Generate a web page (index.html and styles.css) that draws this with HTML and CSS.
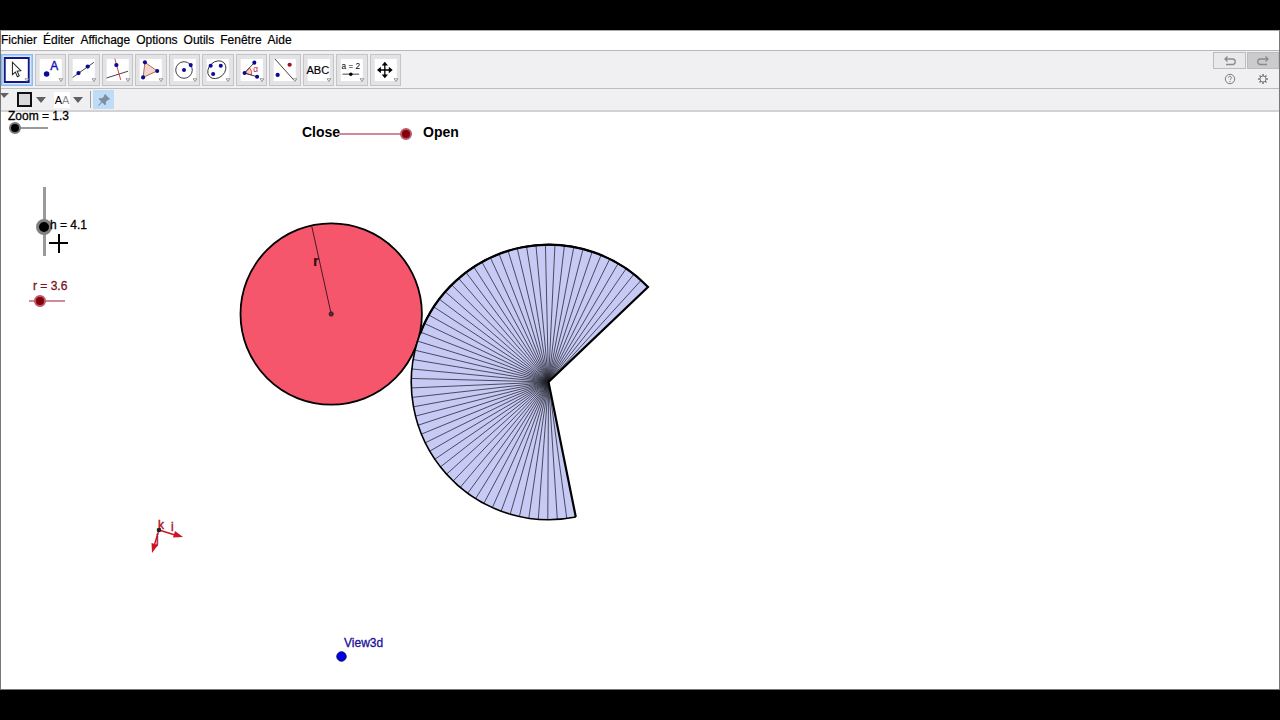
FILE: index.html
```html
<!DOCTYPE html>
<html lang="fr">
<head>
<meta charset="utf-8">
<title>GeoGebra</title>
<link rel="stylesheet" href="styles.css">
</head>
<body>
<div class="app">
  <nav class="menu">
    <button>Fichier</button><button>Éditer</button><button>Affichage</button><button>Options</button><button>Outils</button><button>Fenêtre</button><button>Aide</button>
  </nav>

  <div class="toolbar">
    <div class="tools">
      <button class="tool selected" aria-label="Déplacer"><svg viewBox="0 0 32 32"><path class="face" d="M4 4h24v24H4z"/><path d="M11.300 7.500V21l3.200-2.700 2.200 5 2-1-2.300-5 4-.6z" fill="#fff" stroke="#222" stroke-width="1.100"/><path class="more" d="M25 25.500h4l-2 3z"/></svg></button>
      <button class="tool" aria-label="Point"><svg viewBox="0 0 32 32"><path class="face" d="M4 4h24v24H4z"/><circle class="dot" cx="11.500" cy="20.300" r="3"/><text x="15.500" y="16" class="letter">A</text><path class="more" d="M25 25.500h4l-2 3z"/></svg></button>
      <button class="tool" aria-label="Droite"><svg viewBox="0 0 32 32"><path class="face" d="M4 4h24v24H4z"/><path class="line" d="M4 24 27 7.700"/><circle class="dot" cx="10.300" cy="19.300" r="2.300"/><circle class="dot" cx="20.300" cy="12.300" r="2.300"/><path class="more" d="M25 25.500h4l-2 3z"/></svg></button>
      <button class="tool" aria-label="Perpendiculaire"><svg viewBox="0 0 32 32"><path class="face" d="M4 4h24v24H4z"/><path class="line" d="M3.800 24.700 27.200 17.300"/><path d="m12.800 3.700 6.400 23" stroke="#d0303c" fill="none"/><circle class="dot" cx="14.500" cy="10.700" r="2.300"/><path class="more" d="M25 25.500h4l-2 3z"/></svg></button>
      <button class="tool" aria-label="Polygone"><svg viewBox="0 0 32 32"><path class="face" d="M4 4h24v24H4z"/><path d="M9.700 7.700 23 17 7.700 24z" fill="#f3d5cc" stroke="#b0604c"/><circle class="dot" cx="9.700" cy="7.700" r="2.200"/><circle class="dot" cx="23" cy="17" r="2.200"/><circle class="dot" cx="7.700" cy="24" r="2.200"/><path class="more" d="M25 25.500h4l-2 3z"/></svg></button>
      <button class="tool" aria-label="Cercle"><svg viewBox="0 0 32 32"><path class="face" d="M4 4h24v24H4z"/><circle class="line" cx="15.200" cy="16" r="9"/><circle class="dot" cx="15.200" cy="16" r="2.200"/><circle class="dot" cx="22.500" cy="10.700" r="2.200"/><path class="more" d="M25 25.500h4l-2 3z"/></svg></button>
      <button class="tool" aria-label="Ellipse"><svg viewBox="0 0 32 32"><path class="face" d="M4 4h24v24H4z"/><ellipse class="line" cx="15" cy="15.700" rx="10.800" ry="8.600" transform="rotate(-42 15 15.700)"/><circle class="dot" cx="8.300" cy="11.300" r="2.200"/><circle class="dot" cx="19.300" cy="11.300" r="2.200"/><circle class="dot" cx="11" cy="20.300" r="2.200"/><path class="more" d="M25 25.500h4l-2 3z"/></svg></button>
      <button class="tool" aria-label="Angle"><svg viewBox="0 0 32 32"><path class="face" d="M4 4h24v24H4z"/><path d="M8.200 19.300 13.500 13.600A8 8 0 0 1 15.800 21.500z" fill="#f8c8cc" stroke="#d05060"/><path class="line" d="M18.800 8 8.200 19.300l13.600 4"/><circle class="dot" cx="8.200" cy="19.300" r="2.200"/><circle class="dot" cx="18.800" cy="8" r="2.200"/><circle class="dot" cx="21.800" cy="23.300" r="2.200"/><text x="17.500" y="18" class="alpha">α</text><path class="more" d="M25 25.500h4l-2 3z"/></svg></button>
      <button class="tool" aria-label="Symétrie"><svg viewBox="0 0 32 32"><path class="face" d="M4 4h24v24H4z"/><path class="line" d="m5.300 4 20.400 22.700"/><circle cx="21.300" cy="10.300" r="2.300" fill="#a01020"/><circle class="dot" cx="8.300" cy="21.300" r="2.300"/><path class="more" d="M25 25.500h4l-2 3z"/></svg></button>
      <button class="tool" aria-label="Texte"><svg viewBox="0 0 32 32"><path class="face" d="M4 4h24v24H4z"/><text x="15" y="20" class="abc">ABC</text><path class="more" d="M25 25.500h4l-2 3z"/></svg></button>
      <button class="tool" aria-label="Curseur"><svg viewBox="0 0 32 32"><path class="face" d="M4 4h24v24H4z"/><text x="15" y="15" class="value">a = 2</text><path class="line" d="M6 20.500h18"/><circle cx="15" cy="20.500" r="1.900"/><path class="more" d="M25 25.500h4l-2 3z"/></svg></button>
      <button class="tool" aria-label="Déplacer la vue"><svg viewBox="0 0 32 32"><path class="face" d="M4 4h24v24H4z"/><path d="M15 10v12M9 16h12" stroke="#000" stroke-width="1.400"/><path d="m15 7 3.400 4.200h-6.800zM15 25l3.400-4.200h-6.800zM6.500 16l4.200-3.400v6.800zM23.500 16l-4.200-3.400v6.800z"/><path class="more" d="M25 25.500h4l-2 3z"/></svg></button>
    </div>
    <div class="actions">
      <button class="history" aria-label="Annuler"><svg viewBox="0 0 16 12"><path d="M5.500 1.500 3 4l2.500 2.500M3 4h7.500a2.700 2.700 0 0 1 0 5.500H4"/></svg></button>
      <button class="history off" aria-label="Refaire"><svg viewBox="0 0 16 12"><path d="M10.500 1.500 13 4l-2.500 2.500M13 4H5.500a2.700 2.700 0 0 0 0 5.500H12"/></svg></button>
      <button class="small" aria-label="Aide"><svg viewBox="0 0 12 12"><circle cx="6" cy="6" r="4.700"/><path d="M4.500 4.800c0-2 3-2 3 0 0 1.200-1.500 1.100-1.500 2.300M6 8v1.200"/></svg></button>
      <button class="small" aria-label="Préférences"><svg viewBox="0 0 12 12"><circle cx="6" cy="6" r="3"/><path stroke-width="1.600" d="M6 1v2M6 9v2M1 6h2M9 6h2M2.500 2.500l1.300 1.300M8.200 8.200l1.300 1.300M2.500 9.500l1.300-1.300M8.200 3.800l1.300-1.300"/></svg></button>
    </div>
  </div>

  <div class="stylebar">
    <button class="corner" aria-label="Barre de style"><span class="arrow"></span></button>
    <button class="choice" aria-label="Couleur"><span class="swatch"></span><span class="arrow"></span></button>
    <button class="choice" aria-label="Taille du texte"><span class="sizes">A<span class="pale">A</span></span><span class="arrow"></span></button>
    <span class="rule"></span>
    <button class="pin" aria-label="Épingler"><svg viewBox="0 0 14 14"><path d="m8 1 5 5-1.500 1L11 6.800 8.800 9l.2 2.500-1 .8L5.300 9.600 1.500 13 1 12.500l3.400-3.800L1.700 6l.8-1 2.500.2L7.200 3 7 2.500z"/></svg></button>
  </div>

  <main class="canvas">
    <svg class="drawing" width="700" height="577" viewBox="0 112 700 577">
      <circle cx="331.200" cy="314" r="90.700" fill="#f5566c" stroke="#000" stroke-width="1.800"/>
      <path d="M331.200 314 311.700 226" stroke="#4a1820"/>
      <circle cx="331.200" cy="314" r="2.200" fill="#5a2a30" stroke="#222" stroke-width=".8"/>
      <text x="313" y="266" class="radius">r</text>
      <path d="M548.500 382 648 287A137.500 137.500 0 1 0 575.800 517z" fill="#c6caf5"/>
      <g id="folds" stroke="#202028" stroke-width=".75"></g>
      <path d="M648 287A137.500 137.500 0 1 0 575.800 517" fill="none" stroke="#000" stroke-width="1.600"/>
      <path d="M420 334A137.500 137.500 0 0 1 648 287L548.500 382 575.800 517" fill="none" stroke="#000" stroke-width="2.200"/>
      <g stroke="#d01428" fill="#d01428"><path stroke-width="1.400" d="m159 530 16 5M159 530l-5 16"/><path stroke="none" d="m183 537-10 .5 2-6.500zM152 553l-.5-10 6.500 2z"/></g>
      <g class="axes"><text x="158" y="529">k</text><text x="171" y="531">i</text><text x="156" y="543">j</text></g>
      <circle cx="159" cy="530" r="2.300" fill="#202028"/>
      <circle cx="341.500" cy="656.500" r="4.700" fill="#0000e6" stroke="#000060"/>
      <path d="M49 243h19M59 234v19" stroke="#000" stroke-width="2"/>
    </svg>
    <label class="label zoom-label" for="zoom">Zoom = 1.3</label>
    <input class="slider zoom" id="zoom" type="range" min="0" max="100" value="0">
    <input class="slider height" id="height" type="range" min="0" max="100" value="39">
    <label class="label h-label" for="height">h = 4.1</label>
    <label class="label r-label" for="radius">r = 3.6</label>
    <input class="slider red r" id="radius" type="range" min="0" max="100" value="22">
    <label class="label strong close-label" for="open">Close</label>
    <input class="slider red open" id="open" type="range" min="0" max="100" value="100">
    <span class="label strong open-label">Open</span>
    <span class="label view-label">View3d</span>
  </main>
</div>
<script src="script.js"></script>
</body>
</html>
```

FILE: styles.css
```css
* { box-sizing: border-box; }
body {
  margin: 0;
  min-height: 100vh;
  padding: 30px 0;
  display: flex;
  background: #000;
  color: #000;
  font: 12px/14px "Liberation Sans", Arial, sans-serif;
}
button {
  margin: 0;
  padding: 0;
  border: 0;
  background: none;
  color: inherit;
  font: inherit;
}
svg { display: block; }
.app {
  flex: 1;
  display: flex;
  flex-direction: column;
  border: 1px solid #77777a;
  border-top-color: #aaa;
  background: #fff;
}
.menu {
  display: flex;
  gap: 6px;
  height: 19px;
  padding-bottom: 2px;
  align-items: center;
  -webkit-text-stroke: 0.2px;
}
.toolbar {
  display: flex;
  justify-content: space-between;
  align-items: center;
  height: 39px;
  border-top: 1px solid #b8b8ba;
  border-bottom: 1px solid #bcbcbe;
  background: #f0eff1;
}
.tools { display: flex; gap: 2px; width: 400px; }
.tool { flex: 1; height: 32px; border: 1px solid #c4c4c6; background: #e3e2e5; }
.tool svg { width: 100%; height: 30px; overflow: visible; }
.selected { border: 1px solid #8ebce8; background: #d7e9fa; box-shadow: inset 0 0 0 1px #a9cff2; }
.selected .face { stroke: #141488; stroke-width: 2; d: path("M3 3h26v26H3z"); }
.face { fill: #fff; }
.line { fill: none; stroke: #333; stroke-width: 1; }
.dot { fill: #0a0a96; }
.more { fill: #fff; stroke: #777; stroke-width: .8; }
.letter { font-size: 13px; fill: #1414b4; stroke: #1414b4; stroke-width: .4; }
.alpha { font-size: 9px; fill: #c02030; }
.abc { font-size: 12px; text-anchor: middle; stroke: #000; stroke-width: .2; }
.value { font-size: 9px; text-anchor: middle; }
.actions { display: grid; grid-template-columns: 33px 32px; gap: 2px 1px; }
.history {
  display: grid;
  place-items: center;
  height: 17px;
  border: 1px solid #bcbcbe;
  background: #e9e8ea;
}
.history svg { width: 16px; height: 12px; fill: none; stroke: #8a8a8c; stroke-width: 1.3; }
.off { background: #cbcacc; }
.small { display: grid; place-items: center; height: 16px; }
.small svg { width: 12px; height: 12px; fill: none; stroke: #7c7c7e; }
.stylebar {
  display: flex;
  align-items: center;
  height: 23px;
  border-bottom: 2px solid #d2d1d4;
  background: #f0eff1;
}
.arrow {
  width: 0;
  border: 5px solid transparent;
  border-top-color: #606062;
  border-bottom: 0;
}
.corner { align-self: flex-start; width: 16px; padding-top: 4px; }
.corner .arrow { display: block; border-left-width: 4px; margin-left: -1px; }
.choice { display: flex; align-items: center; gap: 4px; margin-right: 8px; }
.choice .arrow { border-top-width: 6px; }
.swatch { width: 15px; height: 15px; border: 2px solid #111; background: #dad9dc; }
.sizes { width: 16px; background: #fff; font-size: 11px; line-height: 16px; text-align: center; }
.choice + .choice { gap: 3px; margin-right: 7px; }
.pale { color: #8a8a8c; }
.rule { width: 1px; height: 17px; margin-right: 2px; background: #a0a0a2; }
.pin { display: grid; place-items: center; width: 21px; height: 19px; background: #bfdcf7; }
.pin svg { width: 14px; height: 14px; fill: #7c8ea2; }
.canvas { position: relative; flex: 1; min-height: 576px; }
.drawing { position: absolute; left: -1px; top: 0; }
.radius { font-size: 15px; font-weight: bold; fill: #2a0c12; }
.axes { font-size: 12px; fill: #b01024; stroke: #b01024; stroke-width: .4; }
.label { position: absolute; white-space: nowrap; -webkit-text-stroke: 0.3px; }
.strong { font-size: 14px; font-weight: bold; line-height: 16px; -webkit-text-stroke: 0; }
.zoom-label { left: 7px; top: -3px; }
.h-label { left: 49px; top: 106px; }
.r-label { left: 32px; top: 167px; color: #7c1024; }
.close-label { left: 301px; top: 12px; }
.open-label { left: 422px; top: 12px; }
.view-label { left: 343px; top: 524px; color: #1a109c; }
.slider {
  --bar: #9a9a9a;
  --knob: #000;
  --ring: #777;
  position: absolute;
  appearance: none;
  margin: 0;
  height: 14px;
  background: linear-gradient(var(--bar), var(--bar)) center / 100% 2px no-repeat;
}
.slider::-webkit-slider-thumb {
  appearance: none;
  width: 12px;
  height: 12px;
  border: 2px solid var(--ring);
  border-radius: 50%;
  background: var(--knob);
}
.red { --bar: #d08a98; --knob: #850008; --ring: #b85868; }
.zoom { left: 8px; top: 9px; width: 39px; }
.height {
  left: 35px;
  top: 75px;
  width: 16px;
  height: 69px;
  writing-mode: vertical-lr;
  direction: rtl;
  background-size: 3px 100%;
}
.height::-webkit-slider-thumb { width: 16px; height: 16px; border: 3px solid #808080; }
.r { left: 28px; top: 182px; width: 36px; }
.open { left: 338px; top: 15px; width: 73px; }
```

FILE: script.js
```js
// Fold lines of the unrolled cone, evenly spaced across the sector.
const folds = document.getElementById('folds');
const centre = { x: 548.5, y: 382 };
const start = 43.7, sweep = 237.9, parts = 60, radius = 137.5;
for (let i = 1; i < parts; i++) {
  const angle = (start + sweep * i / parts) * Math.PI / 180;
  const line = document.createElementNS('http://www.w3.org/2000/svg', 'line');
  line.setAttribute('x1', centre.x);
  line.setAttribute('y1', centre.y);
  line.setAttribute('x2', centre.x + radius * Math.cos(angle));
  line.setAttribute('y2', centre.y - radius * Math.sin(angle));
  folds.append(line);
}
```
